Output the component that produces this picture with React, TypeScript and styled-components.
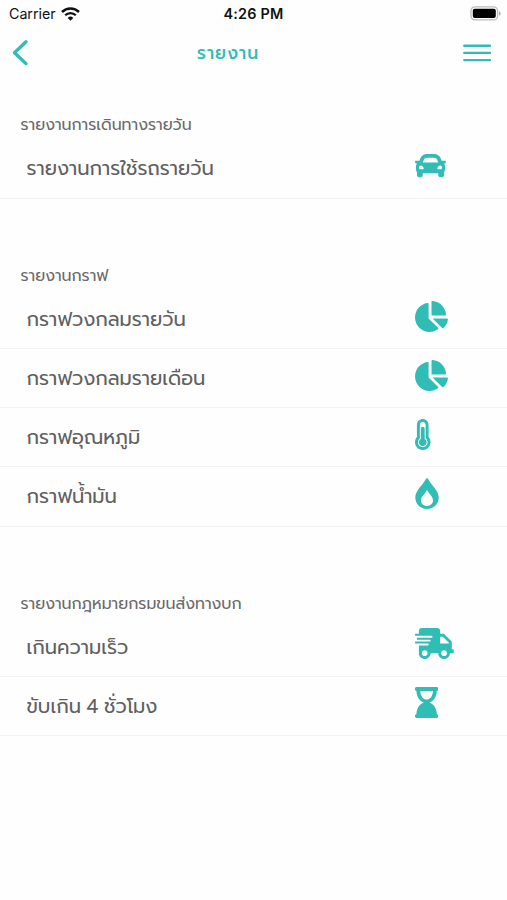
import React from "react";
import styled, { createGlobalStyle } from "styled-components";
import {
  FaCar,
  FaChartPie,
  FaShippingFast,
  FaHourglassEnd,
  FaThermometerThreeQuarters,
} from "react-icons/fa";

const teal = "#2fbdb5";

const GlobalStyle = createGlobalStyle`
  body {
    margin: 0;
    background: #fff;
    font-family: Prompt, "Noto Sans", sans-serif;
  }
`;

const Screen = styled.main`
  width: 507px;
  height: 900px;
  overflow: hidden;
  background: #fefefe;
`;

const StatusBar = styled.div`
  display: grid;
  grid-template-columns: 1fr auto 1fr;
  align-items: center;
  height: 27px;
  padding: 0 6px 0 9px;
  color: #111;
  font: 400 14.3px/27px Inter, sans-serif;
`;

const Carrier = styled.span`
  display: flex;
  align-items: center;
  gap: 5.5px;
  letter-spacing: -0.05px;
`;

const Clock = styled.span`
  margin-right: 3px;
  font-weight: 600;
  letter-spacing: 0.2px;
  font-size: 14.4px;
`;

const BatterySlot = styled.span`
  display: flex;
  justify-content: flex-end;
`;

const NavBar = styled.header`
  display: grid;
  grid-template-columns: 185px auto 1fr;
  align-items: center;
  height: 51px;
  padding: 0 15px 0 12px;
`;

const IconButton = styled.button<{ $end?: boolean }>`
  display: flex;
  justify-self: ${(p) => (p.$end ? "end" : "start")};
  padding: 0;
  border: 0;
  background: none;
`;

const Title = styled.h1`
  margin: 0;
  color: ${teal};
  font-size: 17.2px;
  font-weight: 500;
  line-height: 30px;
  letter-spacing: 1px;
`;

const Section = styled.section<{ $gap: number }>`
  padding-top: ${(p) => p.$gap}px;
`;

const SectionTitle = styled.h2`
  margin: 0;
  padding-left: 20.5px;
  height: 28px;
  color: #6a6a6a;
  font-size: 15.8px;
  font-weight: 400;
  line-height: 28px;
  white-space: nowrap;
`;

const Row = styled.div`
  box-sizing: border-box;
  display: grid;
  grid-template-columns: 388.5px 1fr;
  height: 59.15px;
  padding-left: 26.5px;
  border-bottom: 1px solid #f2f2f2;
`;

const Label = styled.span`
  color: #606060;
  font-size: 19.5px;
  line-height: 59px;
  word-spacing: -1.5px;
  white-space: nowrap;
`;

const RowIcon = styled.span<{ $width: number }>`
  display: flex;
  align-items: flex-start;
  padding-top: 10.5px;
  color: ${teal};

  svg {
    flex: none;
    height: 31px;
    width: ${(p) => p.$width}px;
  }
`;

const Wifi = () => (
  <svg width="19" height="14" viewBox="0 0 19 14" fill="none" stroke="#111">
    <path d="M1 5a12.2 12.2 0 0 1 17 0" strokeWidth="2.5" />
    <path d="M4.2 8.3a7.5 7.5 0 0 1 10.6 0" strokeWidth="2.3" />
    <path d="M6.7 10.9a4 4 0 0 1 5.6 0L9.5 13.7z" fill="#111" stroke="none" />
  </svg>
);

const Battery = () => (
  <svg width="31" height="15" viewBox="0 0 31 15">
    <rect x="1" y="0.9" width="26.6" height="13" rx="4" fill="#fff" stroke="#bbb" strokeWidth="1.3" />
    <rect x="2.8" y="2.7" width="23" height="9.4" rx="2" fill="#000" />
    <path d="M29 5.2v4.6q1.7-.8 1.7-2.3T29 5.2z" fill="#aaa" />
  </svg>
);

const Back = () => (
  <svg width="17" height="26" viewBox="0 0 17 26" fill="none" stroke={teal} strokeWidth="3.3" strokeLinecap="round" strokeLinejoin="round">
    <path d="M14 1.8L2.5 12.8 14 23.6" />
  </svg>
);

const Menu = () => (
  <svg width="30" height="20" viewBox="0 0 30 20" stroke={teal} strokeWidth="2.4" strokeLinecap="round">
    <path d="M2.3 2.7h25.6M2.3 9.9h25.6M2.3 17.1h25.6" />
  </svg>
);

const Drop = () => (
  <svg viewBox="0 0 24 31" fill="currentColor">
    <path
      fillRule="evenodd"
      d="M12 .3C11.2.3 10.9.8 10.3 1.9 7.2 7.6.3 12.4.3 19.5.3 26 5.5 31 12 31s11.7-5 11.7-11.5c0-7.1-6.9-11.9-10-17.6C13.1.8 12.8.3 12 .3zm0 11.4c1.6 3.7 6 6.5 6 10.7 0 3.1-2.6 5.5-6 5.5s-6-2.4-6-5.5c0-4.2 4.4-7 6-10.7z"
    />
  </svg>
);

const sections = [
  {
    title: "รายงานการเดินทางรายวัน",
    gap: 33.4,
    rows: [{ label: "รายงานการใช้รถรายวัน", icon: <FaCar />, width: 31 }],
  },
  {
    title: "รายงานกราฟ",
    gap: 63.5,
    rows: [
      { label: "กราฟวงกลมรายวัน", icon: <FaChartPie />, width: 33 },
      { label: "กราฟวงกลมรายเดือน", icon: <FaChartPie />, width: 33 },
      { label: "กราฟอุณหภูมิ", icon: <FaThermometerThreeQuarters />, width: 15.5 },
      { label: "กราฟน้ำมัน", icon: <Drop />, width: 24 },
    ],
  },
  {
    title: "รายงานกฎหมายกรมขนส่งทางบก",
    gap: 63,
    rows: [
      { label: "เกินความเร็ว", icon: <FaShippingFast />, width: 38.75 },
      { label: "ขับเกิน 4 ชั่วโมง", icon: <FaHourglassEnd />, width: 23.25 },
    ],
  },
];

export default function App() {
  return (
    <>
      <GlobalStyle />
      <Screen>
        <StatusBar>
          <Carrier>
            Carrier
            <Wifi />
          </Carrier>
          <Clock>4:26 PM</Clock>
          <BatterySlot>
            <Battery />
          </BatterySlot>
        </StatusBar>
        <NavBar>
          <IconButton aria-label="Back">
            <Back />
          </IconButton>
          <Title>รายงาน</Title>
          <IconButton $end aria-label="Menu">
            <Menu />
          </IconButton>
        </NavBar>
        {sections.map((section) => (
          <Section key={section.title} $gap={section.gap}>
            <SectionTitle>{section.title}</SectionTitle>
            {section.rows.map((row) => (
              <Row key={row.label}>
                <Label>{row.label}</Label>
                <RowIcon $width={row.width}>{row.icon}</RowIcon>
              </Row>
            ))}
          </Section>
        ))}
      </Screen>
    </>
  );
}
